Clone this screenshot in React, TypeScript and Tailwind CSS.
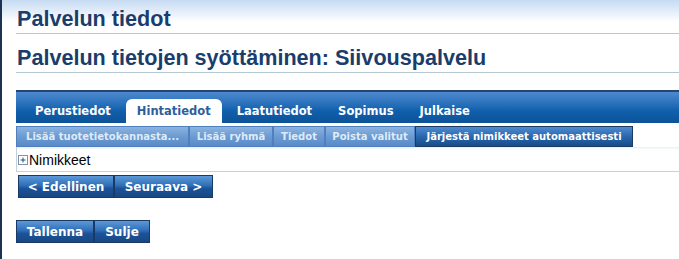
import React from "react";

const font = { fontFamily: '"DejaVu Sans", Verdana, sans-serif' };

function NavBtn({ children, w }: { children: React.ReactNode; w: string }) {
  return (
    <div
      className={`${w} h-full flex items-center justify-center text-white font-bold text-[12px] border border-[#1b3a63] bg-[linear-gradient(to_bottom,#5d99da,#2f6fb7_45%,#1b5299_60%,#184883)]`}
      style={font}
    >
      {children}
    </div>
  );
}

function ToolBtn({ children, w, active }: { children: React.ReactNode; w: string; active?: boolean }) {
  return (
    <div
      className={`${w} h-full flex items-center justify-center font-bold text-[10px] border ${
        active
          ? "text-white border-[#1b3a63] bg-[linear-gradient(to_bottom,#4f8bd0,#2a67ad_50%,#184b8a)]"
          : "text-[#dfeaf7] border-[#4f80bd] bg-[linear-gradient(to_bottom,#8ab3e0,#6c9bd3_50%,#5a8bc8)]"
      }`}
      style={font}
    >
      {children}
    </div>
  );
}

export default function App() {
  const tabs = ["Perustiedot", "Hintatiedot", "Laatutiedot", "Sopimus", "Julkaise"];
  return (
    <div className="h-[259px] w-full border-l-[2px] border-[#1c3354] bg-[linear-gradient(to_bottom,#c6daf2,#ffffff_22px)] overflow-hidden">
      <div className="pl-[14px] pt-[5px]">
        <div
          className="h-[29px] border-b border-[#b5c9d3] pl-[1px] text-[21.6px] font-bold leading-[27px] text-[#1a3d6c]"
          style={{ fontFamily: '"Liberation Sans", Arial, sans-serif' }}
        >
          Palvelun tiedot
        </div>
        <div
          className="mt-[10px] h-[29px] border-b border-[#b5c9d3] pl-[1px] text-[21.6px] font-bold leading-[27px] text-[#1a3d6c]"
          style={{ fontFamily: '"Liberation Sans", Arial, sans-serif' }}
        >
          Palvelun tietojen syöttäminen: Siivouspalvelu
        </div>

        <div className="mt-[17px] h-[33px] border-t-2 border-[#27456f] bg-[linear-gradient(to_bottom,#4d8ad0,#236bb6_45%,#1060ad_60%,#0d5297)] flex items-end pl-[8px] gap-[4px]">
          {tabs.map((t) => (
            <div
              key={t}
              className={`h-[24px] px-[11px] pt-[2px] flex items-center font-bold text-[11.5px] ${
                t === "Hintatiedot" ? "bg-white text-[#2e5e9b] rounded-t-[6px]" : "text-white"
              }`}
              style={font}
            >
              {t}
            </div>
          ))}
        </div>

        <div className="mt-[3px] h-[21px] flex">
          <ToolBtn w="w-[173px]">Lisää tuotetietokannasta...</ToolBtn>
          <ToolBtn w="w-[84px]">Lisää ryhmä</ToolBtn>
          <ToolBtn w="w-[52px]">Tiedot</ToolBtn>
          <ToolBtn w="w-[90px]">Poista valitut</ToolBtn>
          <ToolBtn w="w-[218px]" active>
            Järjestä nimikkeet automaattisesti
          </ToolBtn>
        </div>

        <div className="h-[25px] border-l border-b border-[#c5d1d9] flex items-end pb-[3px] pl-[1px] shadow-[inset_0_3px_3px_-2px_#e3ebf3]">
          <svg width="10" height="10" viewBox="0 0 10 10" className="mb-[3px]">
            <rect x="0.5" y="0.5" width="9" height="9" fill="#fff" stroke="#7d93ad" />
            <path d="M2.5 5H7.5M5 2.5V7.5" stroke="#2d4f7c" strokeWidth="1" />
          </svg>
          <span
            className="ml-[1px] text-[14px] leading-[16px] text-black"
            style={{ fontFamily: '"Liberation Sans", Arial, sans-serif' }}
          >
            Nimikkeet
          </span>
        </div>

        <div className="mt-[3px] ml-[2px] h-[23px] flex">
          <NavBtn w="w-[96px]">&lt; Edellinen</NavBtn>
          <NavBtn w="w-[99px]">Seuraava &gt;</NavBtn>
        </div>

        <div className="mt-[22px] h-[23px] flex">
          <NavBtn w="w-[78px]">Tallenna</NavBtn>
          <NavBtn w="w-[56px]">Sulje</NavBtn>
        </div>
      </div>
    </div>
  );
}
